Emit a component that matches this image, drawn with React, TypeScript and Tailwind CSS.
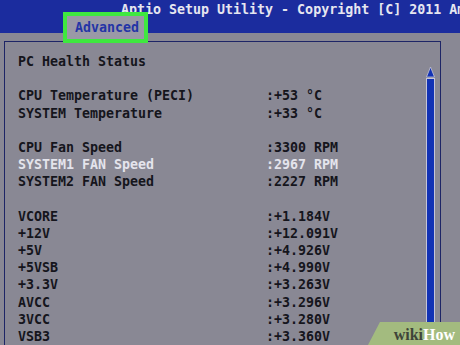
const mono = { fontFamily: '"DejaVu Sans Mono", "Liberation Mono", monospace' };

type Row = { label: string; value: string; hi?: boolean } | null;

const rows: Row[] = [
  { label: "PC Health Status", value: "" },
  null,
  { label: "CPU Temperature (PECI)", value: ":+53 °C" },
  { label: "SYSTEM Temperature", value: ":+33 °C" },
  null,
  { label: "CPU Fan Speed", value: ":3300 RPM" },
  { label: "SYSTEM1 FAN Speed", value: ":2967 RPM", hi: true },
  { label: "SYSTEM2 FAN Speed", value: ":2227 RPM" },
  null,
  { label: "VCORE", value: ":+1.184V" },
  { label: "+12V", value: ":+12.091V" },
  { label: "+5V", value: ":+4.926V" },
  { label: "+5VSB", value: ":+4.990V" },
  { label: "+3.3V", value: ":+3.263V" },
  { label: "AVCC", value: ":+3.296V" },
  { label: "3VCC", value: ":+3.280V" },
  { label: "VSB3", value: ":+3.360V" },
];

export default function App() {
  return (
    <div
      className="relative h-[345px] w-[460px] overflow-hidden bg-[#898894] text-[13.3px] font-bold leading-[17.2px] text-[#15151c]"
      style={mono}
    >
      <header className="h-[33px] bg-[#1b2c9e] pl-[121px] pt-[1px] whitespace-nowrap text-[#e6e6f0]">
        Aptio Setup Utility - Copyright [C] 2011 American Megatrends, Inc.
      </header>

      {/* highlighted tab */}
      <div className="absolute left-[63px] top-[12px] flex h-[31px] w-[85px] items-center border-[4px] border-[#3fe83f] bg-[#9a99a6] pl-[8px] text-[#2434a6]">
        Advanced
      </div>

      <section className="ml-[4px] mt-[8px] flex h-[320px] w-[437px] border-l border-r border-t border-[#1e2566]">
        <div className="flex-1 pl-[13px] pt-[11px]">
          {rows.map((r, i) =>
            r ? (
              <div key={i} className={`flex h-[17.2px] whitespace-nowrap ${r.hi ? "text-[#e4e4ec]" : ""}`}>
                <span className="w-[248px]">{r.label}</span>
                <span>{r.value}</span>
              </div>
            ) : (
              <div key={i} className="h-[17.2px]" />
            )
          )}
        </div>
        <div className="mr-[5px] mt-[25px] flex w-[9px] flex-col items-center">
          <svg width="9" height="11" viewBox="0 0 9 11">
            <polygon points="4.5,0 8.5,10 0.5,10" fill="#1232b4" stroke="#c4c4d8" strokeWidth="0.8" />
          </svg>
          <div className="w-[9px] flex-1 border border-[#c4c4d8] bg-[#1232b4]" />
        </div>
      </section>

      {/* wikiHow watermark */}
      <div
        className="absolute bottom-0 right-0 flex h-[23px] w-[92px] items-center justify-end bg-[#a3bb7f] pr-[5px] pt-[2px]"
        style={{ clipPath: "polygon(13% 0, 100% 0, 100% 100%, 0 100%)" }}
      >
        <span className="text-[16px] font-bold leading-none" style={{ fontFamily: '"Liberation Serif", serif' }}>
          <span className="text-[#3e4438]">wiki</span>
          <span className="text-white">How</span>
        </span>
      </div>
    </div>
  );
}
